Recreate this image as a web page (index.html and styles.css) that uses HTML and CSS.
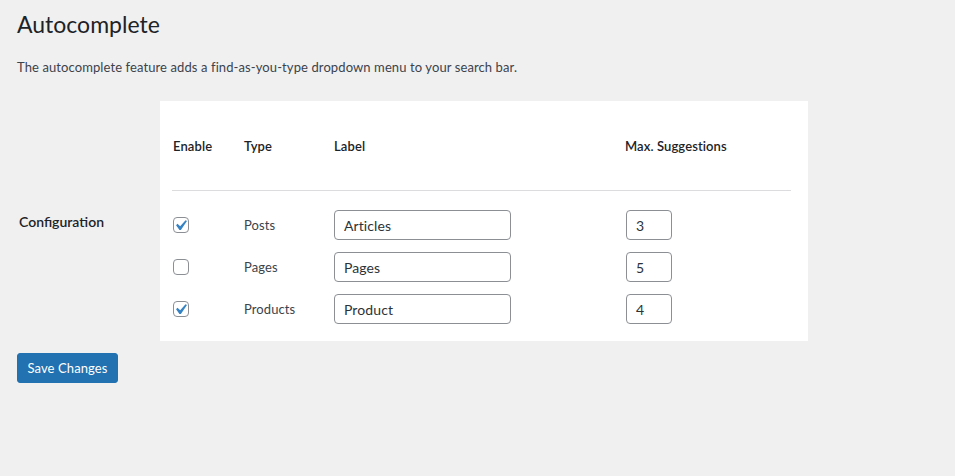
FILE: index.html
```html
<!DOCTYPE html>
<html lang="en">
<head>
<meta charset="utf-8">
<title>Autocomplete</title>
<link rel="stylesheet" href="styles.css">
</head>
<body>
<div class="wrap">
  <h1 class="title">Autocomplete</h1>
  <p class="desc">The autocomplete feature adds a find-as-you-type dropdown menu to your search bar.</p>
  <div class="setting">
    <div class="setting-label">Configuration</div>
    <div class="panel">
      <div class="grid head">
        <div>Enable</div>
        <div>Type</div>
        <div>Label</div>
        <div>Max. Suggestions</div>
      </div>
      <div class="rows">
        <div class="grid row">
          <span class="cb checked"><svg viewBox="0 0 20 20"><path d="M14.83 4.89l1.34.94-5.81 8.38H9.02L5.78 9.67l1.34-1.25 2.57 2.4z"/></svg></span>
          <div class="type">Posts</div>
          <div><input class="text" type="text" value="Articles"></div>
          <div><input class="num" type="text" value="3"></div>
        </div>
        <div class="grid row">
          <span class="cb"></span>
          <div class="type">Pages</div>
          <div><input class="text" type="text" value="Pages"></div>
          <div><input class="num" type="text" value="5"></div>
        </div>
        <div class="grid row">
          <span class="cb checked"><svg viewBox="0 0 20 20"><path d="M14.83 4.89l1.34.94-5.81 8.38H9.02L5.78 9.67l1.34-1.25 2.57 2.4z"/></svg></span>
          <div class="type">Products</div>
          <div><input class="text" type="text" value="Product"></div>
          <div><input class="num" type="text" value="4"></div>
        </div>
      </div>
    </div>
  </div>
  <button class="btn">Save Changes</button>
</div>
</body>
</html>
```
FILE: styles.css
```css
* { box-sizing: border-box; }
html, body { margin: 0; padding: 0; }
body {
  background: #f0f0f1;
  color: #3c434a;
  font-family: Lato, "Noto Sans", sans-serif;
  font-size: 13px;
  letter-spacing: 0.1px;
  line-height: 1.4;
}
.wrap { padding: 0 0 0 17px; }
.title {
  margin: 0;
  padding-top: 10px;
  font-size: 23px;
  font-weight: 400;
  line-height: 29px;
  letter-spacing: 0;
  color: #1d2327;
}
.desc { margin: 19px 0 0; line-height: 18px; }
.setting { display: flex; margin-top: 25px; }
.setting-label {
  width: 143px;
  padding: 111px 0 0 2px;
  font-size: 14px;
  font-weight: 600;
  letter-spacing: 0;
  color: #1d2327;
}
.panel {
  width: 648px;
  background: #fff;
  padding: 0 17px 17px 12px;
}
.grid {
  display: grid;
  grid-template-columns: 71px 90px 291px 1fr;
  align-items: center;
  padding-left: 1px;
}
.head {
  height: 90px;
  border-bottom: 1px solid #dcdcde;
  font-weight: 600;
  color: #1d2327;
  padding-top: 1px;
}
.rows { display: flex; flex-direction: column; gap: 12px; padding-top: 19px; }
.row { height: 30px; }
.cb {
  position: relative;
  display: block;
  width: 16px;
  height: 16px;
  border: 1px solid #8c8f94;
  border-radius: 4px;
  background: #fff;
}
.cb svg {
  position: absolute;
  left: -4px;
  top: -3px;
  width: 21px;
  height: 21px;
  fill: #3582c4;
}
.type { color: #3c434a; }
input {
  font-family: inherit;
  font-size: 14px;
  letter-spacing: 0.1px;
  color: #2c3338;
  height: 30px;
  border: 1px solid #8c8f94;
  border-radius: 4px;
  padding: 0 9px;
  background: #fff;
  display: block;
}
.text { width: 177px; }
.num { width: 46px; margin-left: 1px; }
.btn {
  display: block;
  margin-top: 12px;
  background: #2271b1;
  border: 1px solid #2271b1;
  color: #fff;
  border-radius: 3px;
  font-family: inherit;
  font-size: 13px;
  letter-spacing: 0.1px;
  white-space: nowrap;
  height: 30px;
  padding: 0;
  width: 101px;
  text-align: center;
}
```
